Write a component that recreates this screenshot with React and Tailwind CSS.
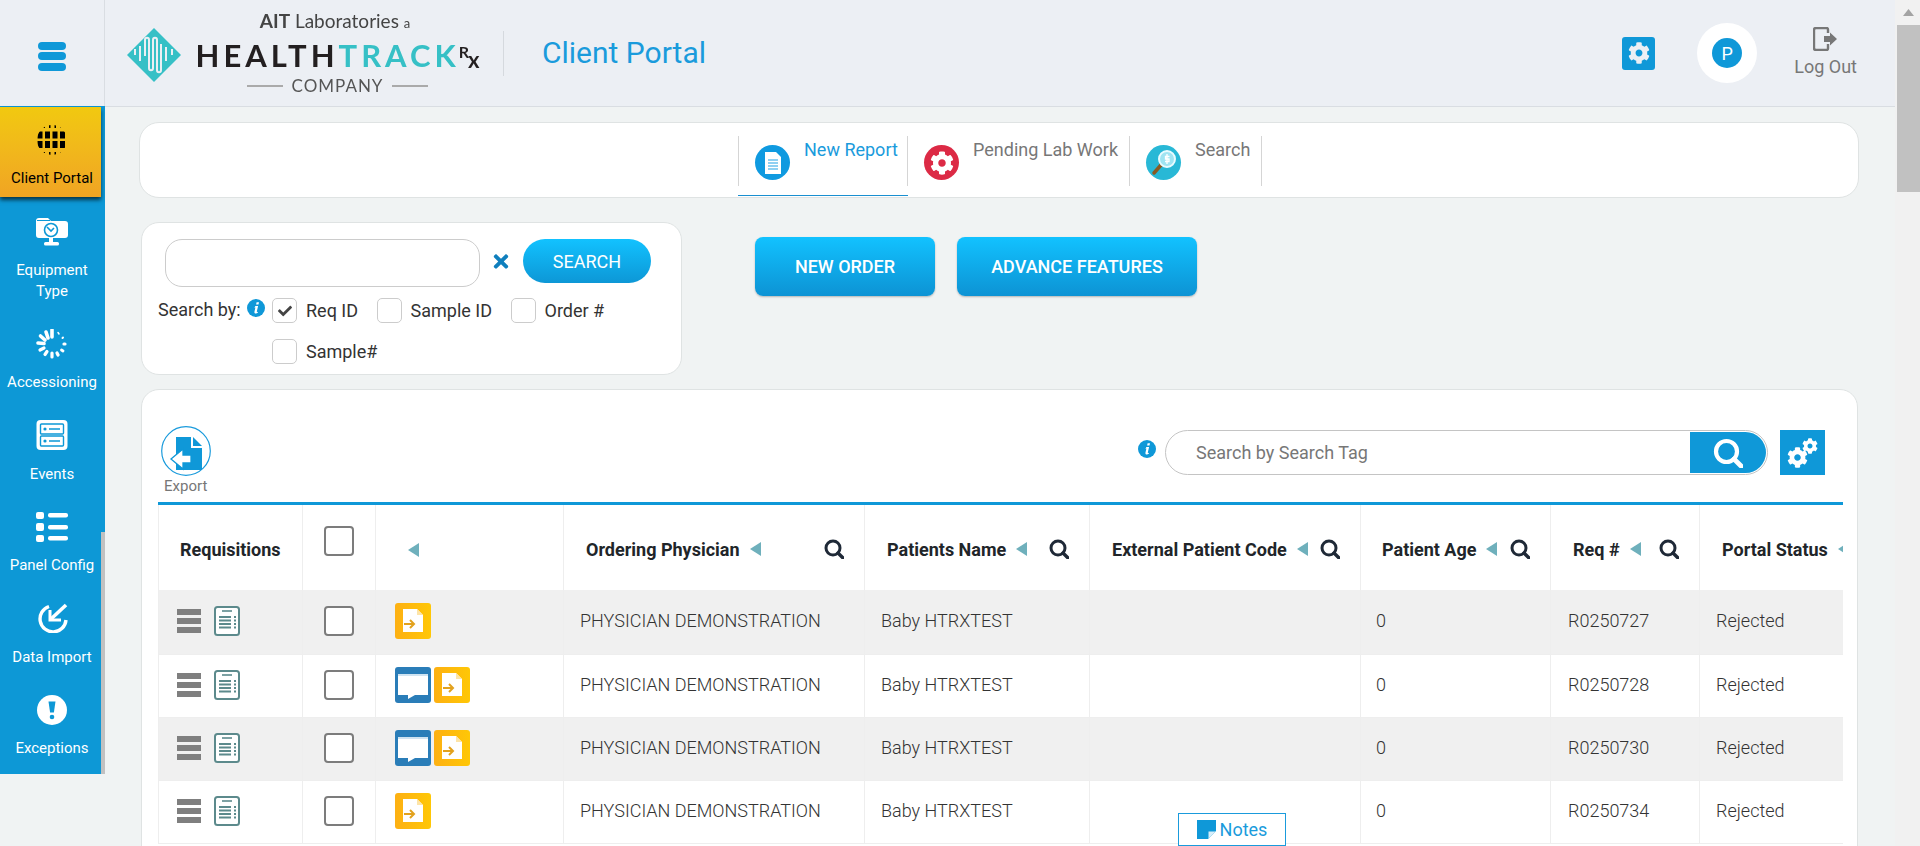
import React from "react";
import { FaCog, FaTimes, FaCheck } from "react-icons/fa";

const Tri = () => (
  <svg width="11" height="14" viewBox="0 0 11 14" className="shrink-0"><polygon points="11,0 11,14 0,7" fill="#6fb0bc" /></svg>
);
const Lens = ({ color = "#1f2937", size = 20, w = 3 }) => (
  <svg width={size} height={size} viewBox="0 0 20 20" className="shrink-0">
    <circle cx="9" cy="9" r="7" fill="none" stroke={color} strokeWidth={w} />
    <line x1="14" y1="14" x2="19" y2="19" stroke={color} strokeWidth={w + 0.4} strokeLinecap="round" />
  </svg>
);
const Info = () => (
  <svg width="18" height="18" viewBox="0 0 18 18" className="shrink-0">
    <circle cx="9" cy="9" r="9" fill="#0f98d8" />
    <path d="M9.6 3.2h2.4l-.5 2.4H9.1zM8.4 7h2.7l-1.3 5.6c-.1.5.3.6 1 .2l.2.8c-1.2 1-3.6 1.5-3.6-.3 0-.3 0-.6.1-.9l.9-3.8-1 .1z" fill="#fff" />
  </svg>
);

function Logo() {
  return (
    <div className="flex items-center ml-[22px] pr-[22px] relative h-[106px] blur-[0.3px]">
      <svg width="54" height="54" viewBox="0 0 54 54" className="shrink-0 mt-[3px]">
        <polygon points="27,0 54,27 27,54 0,27" fill="#36c0c6" />
        <path d="M8 27v-6M13 33V18M18 28V12c0-3 4-3 4 0v28c0 3 4 3 4 0V12c0-3 4-3 4 0v30c0 3 4 3 4 0V16M39 33V19M45 27v-6" fill="none" stroke="#eceff4" strokeWidth="2" />
      </svg>
      <div className="flex flex-col items-center ml-[12px] w-[289px] font-['Lato',sans-serif]">
        <div className="text-[#444] text-[19px] leading-[24px] mb-[4px] ml-[-5px]">
          <span className="font-bold">AIT</span> Laboratories <span className="text-[13px]">a</span>
        </div>
        <div className="flex items-center text-[31px] leading-[32px] font-bold tracking-[4px] whitespace-nowrap">
          <span className="text-[#231f20]">HEALTH</span>
          <span className="text-[#36c0c6]">TRACK</span>
          <span className="text-[#231f20] text-[16px] tracking-[0px] leading-[20px] ml-[-1px] relative top-[-3px]">R</span>
          <span className="text-[#231f20] text-[22px] tracking-[0px] leading-[20px] ml-[-1px] relative top-[5px]">x</span>
        </div>
        <div className="flex items-center gap-[9px] mt-[4px] text-[#555] text-[17px] leading-[22px] tracking-[1px]">
          <span className="block w-[36px] h-[2px] bg-[#aaa]" />
          COMPANY
          <span className="block w-[36px] h-[2px] bg-[#aaa]" />
        </div>
      </div>
    </div>
  );
}

const icons = {
  globe: (
    <svg width="32" height="30" viewBox="0 0 32 30">
      <defs><clipPath id="gc"><circle cx="16" cy="15" r="15" /></clipPath></defs>
      <g clipPath="url(#gc)" stroke="#000">
        <line x1="0" y1="1.5" x2="32" y2="1.5" strokeWidth="3" strokeDasharray="1.5 4" strokeDashoffset="-2" />
        <line x1="0" y1="10" x2="32" y2="10" strokeWidth="7" strokeDasharray="5 2.5" strokeDashoffset="-1.5" />
        <line x1="0" y1="19.500" x2="32" y2="19.500" strokeWidth="7" strokeDasharray="5 2.5" strokeDashoffset="-1.5" />
        <line x1="0" y1="28.5" x2="32" y2="28.5" strokeWidth="3" strokeDasharray="1.5 4" strokeDashoffset="-2" />
      </g>
    </svg>
  ),
  equipment: (
    <svg width="32" height="30" viewBox="0 0 32 30">
      <path d="M0 5a3 3 0 0 1 3-3h9l3 3h14a3 3 0 0 1 3 3v11a3 3 0 0 1-3 3H3a3 3 0 0 1-3-3z" fill="#fff" />
      <path d="M1 4.5h13" stroke="#0d98d6" strokeWidth="1" />
      <circle cx="15" cy="14" r="6.5" fill="none" stroke="#0d98d6" strokeWidth="1.6" />
      <path d="M11 11l4 4 3-3" fill="none" stroke="#0d98d6" strokeWidth="1.6" />
      <rect x="13" y="22" width="4" height="4" fill="#fff" />
      <rect x="8" y="26" width="15" height="3.5" rx="1.5" fill="#fff" />
    </svg>
  ),
  spinner: (
    <svg width="32" height="30" viewBox="0 0 32 30" stroke="#fff" strokeLinecap="round">
      <line x1="16" y1="1" x2="16" y2="8" strokeWidth="3.6" />
      <line x1="10" y1="3" x2="12" y2="9" strokeWidth="3.6" />
      <line x1="4.5" y1="7" x2="9" y2="11" strokeWidth="3.6" />
      <line x1="2" y1="14" x2="8" y2="14.5" strokeWidth="3.6" />
      <line x1="4" y1="21" x2="8" y2="19" strokeWidth="3.2" />
      <line x1="9" y1="25.5" x2="11" y2="22.5" strokeWidth="3.2" />
      <line x1="16" y1="28" x2="16" y2="24" strokeWidth="3.2" />
      <line x1="22" y1="26" x2="21" y2="24" strokeWidth="3.2" />
      <line x1="27" y1="22" x2="25.5" y2="21" strokeWidth="2.8" />
      <line x1="29" y1="15" x2="28" y2="15" strokeWidth="3.2" />
      <line x1="27" y1="8.5" x2="26.5" y2="9" strokeWidth="2" />
      <line x1="22" y1="3.5" x2="23" y2="5" strokeWidth="1.5" />
    </svg>
  ),
  events: (
    <svg width="32" height="30" viewBox="0 0 32 30">
      <rect x="0.5" y="0" width="31" height="30" rx="4" fill="#fff" />
      <rect x="4.5" y="4" width="23" height="10" rx="1" fill="none" stroke="#0d98d6" strokeWidth="1.4" />
      <rect x="4.5" y="16" width="23" height="10" rx="1" fill="none" stroke="#0d98d6" strokeWidth="1.4" />
      <circle cx="9" cy="9" r="1.6" fill="#0d98d6" /><circle cx="9" cy="21" r="1.6" fill="#0d98d6" />
      <path d="M13 9h11M13 21h11" stroke="#0d98d6" strokeWidth="1.6" />
    </svg>
  ),
  panel: (
    <svg width="32" height="30" viewBox="0 0 32 30" fill="#fff">
      <rect x="0" y="0" width="8" height="7" rx="2" /><rect x="0" y="11" width="8" height="8" rx="2" /><rect x="0" y="23" width="8" height="7" rx="2" />
      <rect x="12" y="1" width="20" height="4.5" rx="2" /><rect x="12" y="13" width="20" height="4.5" rx="2" /><rect x="12" y="24" width="20" height="4.5" rx="2" />
    </svg>
  ),
  data: (
    <svg width="32" height="30" viewBox="0 0 32 30" fill="none" stroke="#fff">
      <path d="M13 3.500A13 13 0 1 0 30 17" strokeWidth="3.4" />
      <path d="M30 2L15 16" strokeWidth="3.6" />
      <path d="M14 7v10h11" strokeWidth="3" />
    </svg>
  ),
  exc: (
    <svg width="32" height="30" viewBox="0 0 32 30">
      <circle cx="16" cy="15" r="15" fill="#fff" />
      <path d="M12.5 6.5h7l-1.6 11h-3.8z" fill="#0d98d6" />
      <circle cx="16" cy="22" r="2.3" fill="#0d98d6" />
    </svg>
  ),
};

function NavItem({ icon, label, two }) {
  return (
    <div className="flex flex-col items-center text-white text-[15px] leading-[21px] pb-[27px] pl-[3px] text-center whitespace-nowrap">
      <div className="h-[30px]">{icons[icon]}</div>
      <div className="mt-[13.5px]">{label}</div>
      {two && <div>{two}</div>}
    </div>
  );
}

function Sidebar() {
  return (
    <aside className="w-[105px] h-[668px] shrink-0 bg-[#0d98d6] relative pt-[1px]">
      <div className="w-[101px] h-[90px] bg-gradient-to-b from-[#f1c90f] to-[#f0a423] shadow-[0_3px_4px_rgba(0,0,0,0.65)] flex flex-col items-center pt-[18px] pl-[3px] text-black text-[15px] leading-[21px] whitespace-nowrap">
        <div className="h-[30px] mb-[13px]">{icons.globe}</div>
        Client Portal
      </div>
      <div className="w-[101px] pt-[19px] flex flex-col">
        <NavItem icon="equipment" label="Equipment" two="Type" />
        <NavItem icon="spinner" label="Accessioning" />
        <NavItem icon="events" label="Events" />
        <NavItem icon="panel" label="Panel Config" />
        <NavItem icon="data" label="Data Import" />
        <NavItem icon="exc" label="Exceptions" />
      </div>
      <div className="absolute right-0 bottom-0 w-[4px] h-[242px] bg-[#c1c1c1]" />
    </aside>
  );
}

function Tab({ label, active, color, children, w }) {
  return (
    <div className="h-[60px] mt-[13px] flex flex-col" style={{ width: w }}>
      <div className={`h-[50px] flex border-r border-[#d5d5d5] pl-[16px] ${active ? "border-l" : ""}`}>
        <div className="w-[35px] h-[35px] mt-[9px] rounded-full flex items-center justify-center shrink-0" style={{ backgroundColor: color }}>{children}</div>
        <div className={`ml-[14px] text-[18px] leading-[26px] mt-[1px] whitespace-nowrap ${active ? "text-[#1a9bdc]" : "text-[#777]"}`}>{label}</div>
      </div>
      {active && <div className="mt-[9px] h-[1px] bg-[#1a8fd0]" />}
    </div>
  );
}

function Check({ checked }) {
  return (
    <div className="flex items-center justify-center w-[25px] h-[25px] border border-[#ccc] rounded-[5px] shrink-0 bg-white">
      {checked && <FaCheck className="text-[#444] text-[14px]" />}
    </div>
  );
}

function Opt({ label, checked }) {
  return (
    <div className="flex items-center mr-[18.5px] h-[25px] mb-[16px]">
      <Check checked={checked} />
      <span className="ml-[9px] text-[18px] text-[#333] whitespace-nowrap -mt-[1px]">{label}</span>
    </div>
  );
}

function SearchCard() {
  return (
    <div className="w-[541px] h-[153px] ml-[2px] bg-white border border-[#dfe3e3] rounded-[18px] pt-[16px] shrink-0">
      <div className="flex pl-[23px]">
        <div className="w-[315px] h-[48px] border border-[#ccc] rounded-[17px]" />
        <div className="w-[18px] ml-[12px] h-[44px] flex items-center"><FaTimes className="text-[#0f7fbd] text-[21px]" /></div>
        <div className="w-[128px] h-[44px] ml-[13px] rounded-full bg-gradient-to-b from-[#12c2ff] to-[#0d97d6] text-white text-[18px] flex items-center justify-center">SEARCH</div>
      </div>
      <div className="flex pl-[16px] mt-[11px]">
        <div className="w-[114px] flex items-start shrink-0">
          <span className="text-[18px] leading-[25px] text-[#333] whitespace-nowrap -mt-[1px]">Search by:</span>
          <span className="ml-[6px] mt-[1px]"><Info /></span>
        </div>
        <div className="flex flex-wrap w-[360px]">
          <Opt label="Req ID" checked />
          <Opt label="Sample ID" />
          <Opt label="Order #" />
          <Opt label="Sample#" />
        </div>
      </div>
    </div>
  );
}

const BigBtn = ({ w, children }) => (
  <div className="h-[59px] rounded-[8px] bg-gradient-to-b from-[#12c2ff] to-[#0d93d4] shadow-[0_1px_2px_rgba(0,0,0,0.25)] text-white text-[18px] font-medium flex items-center justify-center" style={{ width: w }}>{children}</div>
);

const FileTile = () => (
  <svg width="36" height="36" viewBox="0 0 36 36" className="shrink-0">
    <defs><linearGradient id="ft" x1="0" x2="1" y1="0" y2="0"><stop offset="0" stopColor="#fdb013" /><stop offset="1" stopColor="#ffc706" /></linearGradient></defs>
    <rect width="36" height="36" rx="3" fill="url(#ft)" />
    <path d="M8 6h14l6 6v17H8z" fill="#fff" />
    <path d="M22 6v6h6z" fill="#fde4a8" />
    <path d="M9 21h9M15 17l4 4-4 4" fill="none" stroke="#e2a21e" strokeWidth="2" />
  </svg>
);
const ChatTile = () => (
  <svg width="36" height="36" viewBox="0 0 36 36" className="shrink-0">
    <rect width="36" height="36" rx="3" fill="#2a7db8" />
    <path d="M3 7h30v21H20l-7 4v-4H3z" fill="#fff" />
    <rect x="3" y="7" width="30" height="2" fill="#cfe3f1" />
  </svg>
);
const Bars = () => (
  <div className="flex flex-col gap-[3px] w-[24px] shrink-0">
    <div className="h-[6px] bg-[#7f7f7f]" /><div className="h-[6px] bg-[#7f7f7f]" /><div className="h-[6px] bg-[#7f7f7f]" />
  </div>
);
const Sheet = () => (
  <svg width="26" height="30" viewBox="0 0 26 30" className="shrink-0 ml-[13px]">
    <rect x="1" y="1" width="24" height="28" rx="2.5" fill="#fff" stroke="#5c8a8c" strokeWidth="2" />
    <path d="M8 5h10" stroke="#5c8a8c" strokeWidth="1.6" />
    <path d="M5 11h12M5 14.5h12M5 18h12M5 21.500h12" stroke="#5c8a8c" strokeWidth="2" />
    <path d="M20 11h2M20 14.500h2M20 18h2M20 21.500h2" stroke="#5c8a8c" strokeWidth="2" />
  </svg>
);
const TableCheck = () => <div className="w-[30px] h-[30px] border-2 border-[#7c7c7c] rounded-[4px] bg-white" />;

const widths = [144, 73, 188, 301, 225, 271, 190, 149, 200];
const headers = [
  { t: "Ordering Physician", pl: 22 },
  { t: "Patients Name", pl: 22 },
  { t: "External Patient Code", pl: 22 },
  { t: "Patient Age", pl: 21 },
  { t: "Req #", pl: 22 },
  { t: "Portal Status", pl: 22, noSearch: true },
];
const rows = [
  { id: "R0250727", chat: false, h: "h-[64px]" },
  { id: "R0250728", chat: true, h: "h-[63px]" },
  { id: "R0250730", chat: true, h: "h-[63px]" },
  { id: "R0250734", chat: false, h: "h-[63px]" },
];

function DataTable() {
  const th = "border-r border-[#eee] p-0 align-middle";
  const td = "border-r border-b border-[#eee] p-0 font-light text-[18px] text-[#333] whitespace-nowrap";
  return (
    <div className="w-[1685px] overflow-hidden border-t-[3px] border-[#0f98d8]">
      <table className="table-fixed border-collapse w-[1741px] border-l border-[#eee]">
        <colgroup>{widths.map((w, i) => <col key={i} style={{ width: w }} />)}</colgroup>
        <thead>
          <tr className="h-[85px]">
            <th className={th}><div className="pl-[21px] pt-[3px] text-left text-[18px] font-bold text-[#212529]">Requisitions</div></th>
            <th className={th}><div className="flex justify-center -mt-[13px]"><TableCheck /></div></th>
            <th className={th}><div className="pl-[32px] pt-[4px]"><Tri /></div></th>
            {headers.map((h) => (
              <th key={h.t} className={th}>
                <div className="flex items-center pr-[20px] pt-[3px] text-[18px] font-bold text-[#212529] whitespace-nowrap" style={{ paddingLeft: h.pl }}>
                  <span>{h.t}</span>
                  <span className="ml-[10px]"><Tri /></span>
                  {!h.noSearch && <span className="ml-auto"><Lens /></span>}
                </div>
              </th>
            ))}
          </tr>
        </thead>
        <tbody>
          {rows.map((r, i) => (
            <tr key={r.id} className={`${r.h} ${i % 2 === 0 ? "bg-[#f0f0f0]" : "bg-white"}`}>
              <td className={td}><div className="flex items-center pl-[18px] pb-[2px]"><Bars /><Sheet /></div></td>
              <td className={td}><div className="flex justify-center pb-[1px]"><TableCheck /></div></td>
              <td className={td}><div className="flex items-center gap-[3px] pl-[19px] pb-[2px]">{r.chat && <ChatTile />}<FileTile /></div></td>
              <td className={td}><div className="pl-[16px] pb-[2px]">PHYSICIAN DEMONSTRATION</div></td>
              <td className={td}><div className="pl-[16px] pb-[2px]">Baby HTRXTEST</div></td>
              <td className={td} />
              <td className={td}><div className="pl-[15px] pb-[2px]">0</div></td>
              <td className={td}><div className="pl-[17px] pb-[2px]">{r.id}</div></td>
              <td className={td}><div className="pl-[16px] pb-[2px]">Rejected</div></td>
            </tr>
          ))}
        </tbody>
      </table>
    </div>
  );
}

export default function App() {
  return (
    <div className="relative flex h-[846px] overflow-hidden bg-[#f0f3f3] font-['Roboto',sans-serif]">
      <div className="w-[1895px] shrink-0 flex flex-col">
        <header className="h-[106px] shrink-0 flex items-center bg-[#eceff4]">
          <div className="w-[105px] h-[106px] border-r border-[#d9dde2] flex flex-col items-center justify-center gap-[2.5px] shrink-0 pt-[6px]">
            <div className="w-[28px] h-[8px] rounded-[4px] bg-[#0f98d8]" />
            <div className="w-[28px] h-[8px] rounded-[4px] bg-[#0f98d8]" />
            <div className="w-[28px] h-[8px] rounded-[4px] bg-[#0f98d8]" />
          </div>
          <Logo />
          <div className="w-[1px] h-[45px] bg-[#d5d9de] -ml-[1px]" />
          <div className="ml-[38px] text-[30px] text-[#1a9bdc] whitespace-nowrap -mt-[1px]">Client Portal</div>
          <div className="ml-auto flex items-center">
            <div className="w-[33px] h-[33px] rounded-[3px] bg-[#0f98d8] flex items-center justify-center"><FaCog className="text-[#eceff4] text-[22px]" /></div>
            <div className="ml-[42px] w-[60px] h-[60px] rounded-full bg-white flex items-center justify-center">
              <div className="w-[30px] h-[30px] rounded-full bg-[#0f98d8] text-white text-[18px] flex items-center justify-center">P</div>
            </div>
            <div className="ml-[37px] mr-[38px] flex flex-col items-center text-[#777] text-[18px] leading-[24px]">
              <svg width="26" height="24" viewBox="0 0 26 24" className="mb-[4px]">
                <path d="M15 6V2.500a1.500 1.500 0 0 0-1.500-1.500H3a2 2 0 0 0-2 2v18a2 2 0 0 0 2 2h10.500a1.500 1.500 0 0 0 1.500-1.500V17" fill="none" stroke="#777" strokeWidth="2.400" />
                <path d="M11 9h6V5.500l7 6.500-7 6.500V15h-6z" fill="#777" />
              </svg>
              Log Out
            </div>
          </div>
        </header>
        <div className="flex flex-1 min-h-0">
          <Sidebar />
          <main className="flex-1 min-w-0 border-t border-[#d9dde2] pt-[15px] pl-[34px] pr-[36px]">
            <div className="h-[76px] bg-white border border-[#dfe3e3] rounded-[20px] flex pl-[598px]">
              <Tab label="New Report" active color="#0f9ae0" w={170}>
                <svg width="18" height="22" viewBox="0 0 18 22"><path d="M1 0h11l5 5v17H1z" fill="#fff" /><path d="M4 8h10M4 11h10M4 14h10M4 17h10" stroke="#8fd0f2" strokeWidth="2" /></svg>
              </Tab>
              <Tab label="Pending Lab Work" color="#dc2a45" w={222}><FaCog className="text-white text-[24px]" /></Tab>
              <Tab label="Search" color="#28b8d6" w={132}>
                <svg width="28" height="28" viewBox="0 0 28 28">
                  <path d="M11 16L4 24" stroke="#8a5a22" strokeWidth="3.500" strokeLinecap="round" />
                  <circle cx="17" cy="10" r="8" fill="#9fe4f2" stroke="#e8fbff" strokeWidth="2" />
                  <path d="M17 5v10M19.500 7.500h-4v2.500h3.500v2.500h-4" fill="none" stroke="#fff" strokeWidth="1.300" />
                </svg>
              </Tab>
            </div>
            <div className="flex mt-[24px]">
              <SearchCard />
              <div className="flex gap-[22px] ml-[73px] mt-[15px] h-[59px]">
                <BigBtn w={180}>NEW ORDER</BigBtn>
                <BigBtn w={240}>ADVANCE FEATURES</BigBtn>
              </div>
            </div>
            <section className="mt-[14px] ml-[2px] w-[1717px] h-[600px] bg-white border border-[#dfe3e3] rounded-[18px] pl-[16px] overflow-hidden">
              <div className="h-[112px] flex justify-between">
                <div className="pl-[3px] pt-[36px] flex flex-col items-start w-[53px]">
                  <svg width="50" height="50" viewBox="0 0 50 50" className="shrink-0">
                    <circle cx="25" cy="25" r="24.300" fill="#fff" stroke="#1a9bdc" strokeWidth="1.200" />
                    <path d="M15 11h15v11h11v22H15z" fill="#0f98d8" />
                    <path d="M32 11l9 9h-9z" fill="#0f98d8" />
                    <path d="M30 29h-8v-6L10 33l12 10v-6h8z" fill="#fff" stroke="#0f98d8" strokeWidth="1.300" />
                  </svg>
                  <span className="text-[15px] leading-[20px] text-[#777] ml-[3px]">Export</span>
                </div>
                <div className="flex items-start pt-[40px] pr-[32px]">
                  <span className="mt-[10px]"><Info /></span>
                  <div className="ml-[9px] w-[603px] h-[45px] border border-[#c4c4c4] rounded-full flex items-center justify-between pl-[30px]">
                    <span className="text-[18px] text-[#777]">Search by Search Tag</span>
                    <div className="w-[76px] h-[41px] mr-[1px] bg-[#0f98d8] rounded-r-full flex items-center justify-center"><Lens color="#fff" size={30} w={2.8} /></div>
                  </div>
                  <div className="ml-[12px] w-[45px] h-[45px] bg-[#0f98d8] relative">
                    <FaCog className="absolute left-[7px] top-[17px] text-white text-[21px]" />
                    <FaCog className="absolute left-[22px] top-[8px] text-white text-[16px]" />
                  </div>
                </div>
              </div>
              <DataTable />
            </section>
          </main>
        </div>
      </div>
      <div className="w-[25px] shrink-0 bg-[#f1f1f1]">
        <div className="h-[25px] flex items-center justify-center pl-[2px]">
          <svg width="11" height="7" viewBox="0 0 11 7"><polygon points="5.500,0 11,7 0,7" fill="#a3a3a3" /></svg>
        </div>
        <div className="ml-[2px] h-[167px] bg-[#c1c1c1]" />
      </div>
      <div className="absolute left-[1178px] bottom-0 w-[108px] h-[33px] bg-white border border-[#1a9bdc] flex items-center justify-center gap-[4px] text-[18px] text-[#1a9bdc]">
        <svg width="19" height="19" viewBox="0 0 19 19"><path d="M0 0h19v11l-8 8H0z" fill="#0f98d8" /><path d="M11.500 18.500v-7h7z" fill="#d8eef9" /></svg>
        Notes
      </div>
    </div>
  );
}
